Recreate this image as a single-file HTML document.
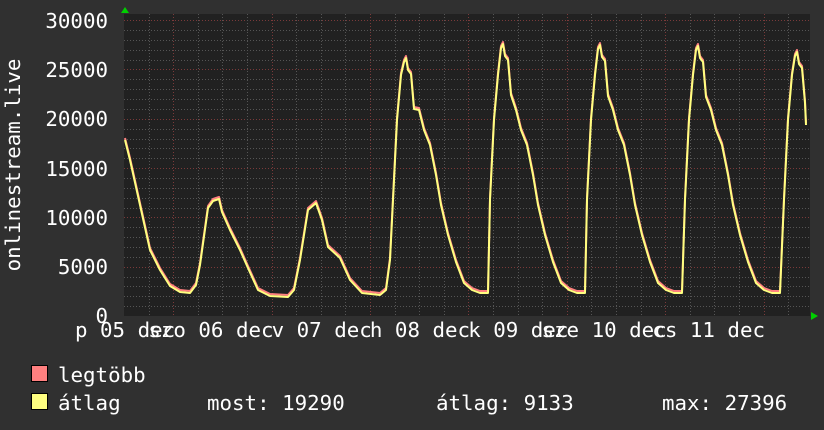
<!DOCTYPE html>
<html><head><meta charset="utf-8"><style>
body{margin:0;background:#303030;width:824px;height:430px;overflow:hidden}
svg{display:block}
text{font-family:"DejaVu Sans Mono","Liberation Mono",monospace;fill:#fff;font-size:20.8px}
</style></head><body>
<svg id="s" width="824" height="430" xmlns="http://www.w3.org/2000/svg">
<rect x="0" y="0" width="824" height="430" fill="#303030"/>
<rect x="124" y="14" width="686" height="302" fill="#212121"/>
<g id="grid"></g>
<g id="curve"></g>
<polygon points="121,13 129,13 125,7" fill="#00d000"/>
<polygon points="811,312 811,320 818,316" fill="#00d000"/>
<g text-anchor="end">
<text x="108" y="28">30000</text>
<text x="108" y="77">25000</text>
<text x="108" y="126">20000</text>
<text x="108" y="176">15000</text>
<text x="108" y="225">10000</text>
<text x="108" y="274">5000</text>
<text x="108" y="323">0</text>
</g>
<text transform="translate(20,165) rotate(-90)" text-anchor="middle">onlinestream.live</text>
<g id="xl"></g>
<rect x="31.5" y="365.5" width="16" height="16" fill="#ff8080" stroke="#000"/>
<rect x="31.5" y="393.5" width="16" height="16" fill="#ffff80" stroke="#000"/>
<text x="58" y="382">legtöbb</text>
<text x="58" y="410">átlag</text>
<text x="207" y="410">most: 19290</text>
<text x="436" y="410">átlag: 9133</text>
<text x="662" y="410">max: 27396</text>
</svg>
<script>
var NS="http://www.w3.org/2000/svg";
function el(t,a,p){var e=document.createElementNS(NS,t);for(var k in a)e.setAttribute(k,a[k]);document.getElementById(p).appendChild(e);return e;}
for(var v=1000;v<=30000;v+=1000){var y=Math.round(316-v*0.00986)+0.5;var maj=v%5000==0;
el("line",{x1:124,x2:810,y1:y,y2:y,stroke:maj?"#7a3a3a":"#555","stroke-dasharray":"1,2"},"grid");}
for(var x=124+24.6;x<810;x+=24.6){var xi=Math.round(x)+0.5;var maj=false;
for(var k=0;k<8;k++){if(Math.abs(x-(172+98.3*k))<3)maj=true;}
el("line",{x1:xi,x2:xi,y1:14,y2:316,stroke:maj?"#7a3a3a":"#555","stroke-dasharray":"1,2"},"grid");}
var pts=[[125,140],[130,160],[140,205],[150,250],[160,270],[170,286],[180,292],[190,293],[196,285],[200,265],[208,208],[213,201],[219,199],[222,212],[230,230],[240,250],[248,268],[258,290],[270,296],[288,297],[294,290],[300,260],[308,210],[316,203],[322,220],[328,247],[340,258],[350,280],[362,293],[380,295],[386,290],[390,260]];
var peaks=[[406,58],[503,44],[600,45],[698,46],[797,52]];
var sh=[[-13,200],[-9,120],[-5,75],[-2,62],[0,0],[2,12],[5,60],[8,95],[13,110],[18,130],[24,145],[30,175],[35,205],[42,235],[50,262],[58,283],[66,290],[74,293],[82,293],[85,285],[88,260]];
peaks.forEach(function(p,i){sh.forEach(function(s){var x=p[0]+s[0];if(x>806)return;if(i<4&&s[0]>82)return;
var y=s[0]==0?p[1]:(s[0]==-2||s[0]==2?p[1]+(s[0]==2?12:4):s[1]+(s[0]>=5&&s[0]<=8?p[1]-44:0));pts.push([x,y]);});});
pts.push([806,125]);
var d1=pts.map(function(p){return p[0]+","+(p[1]-2)}).join(" ");
var d2=pts.map(function(p){return p[0]+","+p[1]}).join(" ");
el("polyline",{points:d1,fill:"none",stroke:"#ff8080","stroke-width":2,"stroke-linejoin":"round"},"curve");
el("polyline",{points:d2,fill:"none",stroke:"#ffff80","stroke-width":2,"stroke-linejoin":"round"},"curve");
var labs=[["p ","05 dec"],["szo ","06 dec"],["v ","07 dec"],["h ","08 dec"],["k ","09 dec"],["sze ","10 dec"],["cs ","11 dec"]];
labs.forEach(function(l,k){var dx=100+98.3*k;var t=el("text",{x:(dx-l[0].length*12.5).toFixed(1),y:337},"xl");t.textContent=l[0]+l[1];});
</script>
</body></html>
